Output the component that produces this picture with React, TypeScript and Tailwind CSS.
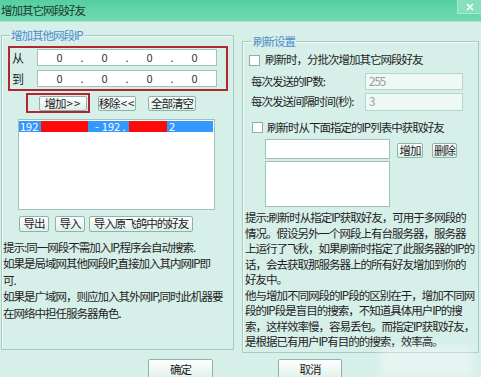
import React from "react";

const btn =
  "flex items-center justify-center whitespace-nowrap rounded-[2px] border border-[#8db4aa] bg-gradient-to-b from-white to-[#dcefe9] text-[#1b1b1b] leading-none";
const field = "border border-[#9fc2ba] bg-white";
const text = "text-[11.5px] tracking-[-1px]";

const leftTips = [
  "提示:同一网段不需加入IP,程序会自动搜索.",
  "如果是局域网其他网段IP,直接加入其内网IP即",
  "可.",
  "如果是广域网，则应加入其外网IP,同时此机器要",
  "在网络中担任服务器角色.",
];

const rightTips = [
  "提示:刷新时从指定IP获取好友，可用于多网段的",
  "情况。假设另外一个网段上有台服务器，服务器",
  "上运行了飞秋，如果刷新时指定了此服务器的IP的",
  "话，会去获取那服务器上的所有好友增加到你的",
  "好友中。",
  "他与增加不同网段的IP段的区别在于，增加不同网",
  "段的IP段是盲目的搜索，不知道具体用户IP的搜",
  "索，这样效率慢，容易丢包。而指定IP获取好友，",
  "是根据已有用户IP有目的的搜索，效率高。",
];

function IpField() {
  // four octets, each 45px apart with a dot between
  return (
    <div className={`${field} flex h-[17px] w-[180px] items-center pl-[2px] text-[11px] text-[#333]`}>
      {[0, 1, 2, 3].map((i) => (
        <React.Fragment key={i}>
          <span className="w-[38px] text-center">0</span>
          {i < 3 ? <span className="w-[7px] text-center">.</span> : null}
        </React.Fragment>
      ))}
    </div>
  );
}

function Check() {
  return <span className="h-[11px] w-[11px] shrink-0 border border-[#93aca6] bg-white" />;
}

export default function App() {
  return (
    <div
      className={`relative h-[377px] w-[481px] overflow-hidden bg-[#d7efe9] font-['Noto_Sans_CJK_SC',sans-serif] text-[#1e1e1e] ${text}`}
    >
      {/* title bar */}
      <div className="relative h-[22px] border-b border-[#aee4cf] bg-gradient-to-b from-[#55cfa0] to-[#72d9b3] pl-[1px] leading-[21px] text-[#173a2e]">
        增加其它网段好友
        <div className="absolute right-0 top-0 flex h-[14px] w-[24px] items-center justify-center border-b border-l border-[#a7e6cf] bg-[#86dfbf]">
          <svg width="8" height="8" viewBox="0 0 8 8" aria-hidden="true">
            <path d="M1 1L7 7M7 1L1 7" stroke="white" strokeWidth="1.5" />
          </svg>
        </div>
      </div>

      <div className="flex">
        {/* left group */}
        <div className="relative ml-[1px] mt-[13px] h-[315px] w-[233px] border border-[#a6cbc2] shadow-[inset_1px_1px_0_#f3fbf9]">
          <span className="absolute -top-[9px] left-[8px] bg-[#d7efe9] px-[1px] text-[#4f8cc9]">
            增加其他网段IP
          </span>

          <div className="ml-[6px] mt-[10px] h-[45px] w-[220px] border-2 border-[#b0282d]">
            <div className="mt-[1px] flex h-[17px] items-center">
              <span className="w-[27px] pl-[2px] text-[12px]">从</span>
              <IpField />
            </div>
            <div className="mt-[4px] flex h-[17px] items-center">
              <span className="w-[27px] pl-[2px] text-[12px]">到</span>
              <IpField />
            </div>
          </div>

          <div className="ml-[24px] mt-[2px] flex items-start">
            <div className="h-[20px] w-[64px] border-2 border-[#b0282d] pl-[11px] pt-[1px]">
              <div className={`${btn} h-[15px] w-[48px]`}>
                增加<span className="ml-[1px] tracking-[1px]">&gt;&gt;</span>
              </div>
            </div>
            <div className={`${btn} ml-[8px] mt-[3px] h-[15px] w-[38px]`}>
              移除<span className="ml-[1px] tracking-[1px]">&lt;&lt;</span>
            </div>
            <div className={`${btn} ml-[12px] mt-[3px] h-[15px] w-[48px]`}>全部清空</div>
          </div>

          <div className={`${field} ml-[16px] mt-[6px] h-[91px] w-[197px]`}>
            <div className="mt-[1px] flex h-[11px] w-[194px] items-center bg-[#3399ff] text-[11px] leading-none tracking-normal text-white">
              <span className="w-[22px] pl-[1px]">192</span>
              <span className="h-full w-[47px] bg-[#ff0a0a]" />
              <span className="w-[41px] pl-[7px]">
                -<span className="ml-[3px]">192 .</span>
              </span>
              <span className="h-full w-[38px] bg-[#ff0a0a]" />
              <span className="pl-[2px]">2</span>
            </div>
          </div>

          <div className="ml-[17px] mt-[6px] flex">
            <div className={`${btn} h-[16px] w-[30px]`}>导出</div>
            <div className={`${btn} ml-[6px] h-[16px] w-[30px]`}>导入</div>
            <div className={`${btn} ml-[4px] h-[16px] w-[104px]`}>导入原飞鸽中的好友</div>
          </div>

          <div className="ml-[1px] mt-[7px] leading-[16.4px]">
            {leftTips.map((l) => (
              <div key={l} className="whitespace-nowrap">
                {l}
              </div>
            ))}
          </div>
        </div>

        {/* right group */}
        <div className="relative ml-[8px] mt-[19px] h-[312px] w-[237px] border border-[#a6cbc2] shadow-[inset_1px_1px_0_#f3fbf9]">
          <span className="absolute -top-[9px] left-[9px] bg-[#d7efe9] px-[1px] text-[#4f8cc9]">
            刷新设置
          </span>

          <div className="ml-[6px] mt-[12px] flex h-[12px] items-center">
            <Check />
            <span className="ml-[5px] whitespace-nowrap">刷新时，分批次增加其它网段好友</span>
          </div>

          <div className="mt-[7px] flex h-[17px] items-center">
            <span className="w-[122px] pl-[8px]">每次发送的IP数:</span>
            <div className="flex h-[17px] w-[98px] items-center border border-[#b6d6ce] bg-[#eef8f5] pl-[3px] text-[#9a9a9a]">
              255
            </div>
          </div>
          <div className="mt-[3px] flex h-[18px] items-center">
            <span className="w-[122px] whitespace-nowrap pl-[8px]">每次发送间隔时间(秒):</span>
            <div className="flex h-[18px] w-[98px] items-center border border-[#b6d6ce] bg-[#eef8f5] pl-[3px] text-[#9a9a9a]">
              3
            </div>
          </div>

          <div className="ml-[9px] mt-[11px] flex h-[11px] items-center">
            <Check />
            <span className="ml-[4px] whitespace-nowrap">刷新时从下面指定的IP列表中获取好友</span>
          </div>

          <div className="ml-[22px] mt-[6px] flex items-start">
            <div className={`${field} h-[20px] w-[125px]`} />
            <div className={`${btn} ml-[7px] mt-[4px] h-[15px] w-[26px]`}>增加</div>
            <div className={`${btn} ml-[9px] mt-[4px] h-[15px] w-[25px]`}>删除</div>
          </div>
          <div className={`${field} ml-[22px] mt-[2px] h-[46px] w-[125px]`} />

          <div className="ml-[2px] mt-[3px] leading-[15.5px]">
            {rightTips.map((l) => (
              <div key={l} className="whitespace-nowrap">
                {l}
              </div>
            ))}
          </div>
        </div>
      </div>

      <div className="mt-[6px] flex">
        <div className={`${btn} ml-[148px] h-[22px] w-[65px]`}>确定</div>
        <div className={`${btn} ml-[65px] h-[22px] w-[64px]`}>取消</div>
      </div>

      {/* faded watermark patch, bottom right */}
      <div className="pointer-events-none absolute bottom-0 right-[8px] h-[30px] w-[92px] bg-white/40 blur-[4px]" />
    </div>
  );
}
